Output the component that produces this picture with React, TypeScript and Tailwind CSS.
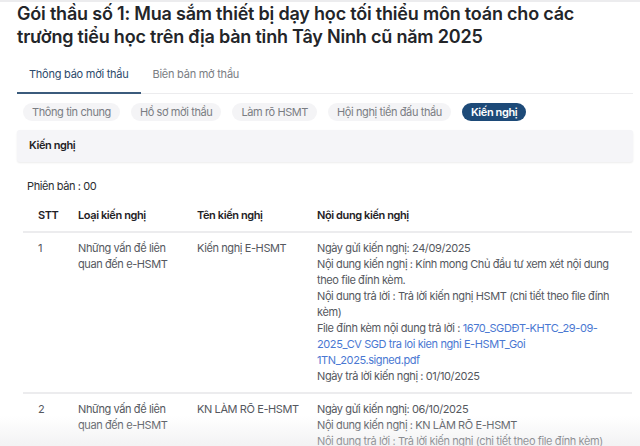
import React from "react";

const PILLS = ["Thông tin chung", "Hồ sơ mời thầu", "Làm rõ HSMT", "Hội nghị tiền đấu thầu", "Kiến nghị"];

type Row = {
  stt: string;
  loai: string;
  ten: string;
  lines: React.ReactNode[];
};

const ROWS: Row[] = [
  {
    stt: "1",
    loai: "Những vấn đề liên quan đến e-HSMT",
    ten: "Kiến nghị E-HSMT",
    lines: [
      "Ngày gửi kiến nghị: 24/09/2025",
      "Nội dung kiến nghị : Kính mong Chủ đầu tư xem xét nội dung theo file đính kèm.",
      "Nội dung trả lời : Trả lời kiến nghị HSMT (chi tiết theo file đính kèm)",
      <>
        File đính kèm nội dung trả lời :{" "}
        <span className="text-[#4a78d2]">1670_SGDĐT-KHTC_29-09-2025_CV SGD tra loi kien nghi E-HSMT_Goi 1TN_2025.signed.pdf</span>
      </>,
      "Ngày trả lời kiến nghị : 01/10/2025",
    ],
  },
  {
    stt: "2",
    loai: "Những vấn đề liên quan đến e-HSMT",
    ten: "KN LÀM RÕ E-HSMT",
    lines: [
      "Ngày gửi kiến nghị: 06/10/2025",
      "Nội dung kiến nghị : KN LÀM RÕ E-HSMT",
      "Nội dung trả lời : Trả lời kiến nghị (chi tiết theo file đính kèm)",
    ],
  },
];

const COLS = "grid grid-cols-[40px_119px_120px_1fr]";

export default function App() {
  return (
    <div className="relative w-[640px] h-[446px] overflow-hidden bg-white font-['Inter',sans-serif] tracking-[-0.4px]">
      <div className="h-[2px] bg-[#ececee]" />

      <h1 className="px-[17px] text-[18px] leading-[23px] font-semibold tracking-[-0.2px] text-[#232529]">
        Gói thầu số 1: Mua sắm thiết bị dạy học tối thiểu môn toán cho các trường tiểu học trên địa bàn tỉnh Tây Ninh cũ năm 2025
      </h1>

      <div className="ml-[17px] mr-[7px] mt-[12px] flex border-b border-[#ececee] text-[11px] tracking-[-0.25px]">
        <div className="-mb-px border-b-2 border-[#3b5b7c] px-[12px] pt-[6px] pb-[9px] text-[#2c4a6b]">Thông báo mời thầu</div>
        <div className="px-[12px] pt-[6px] pb-[9px] text-[#7a7d83]">Biên bản mở thầu</div>
      </div>

      <div className="mt-[9px] flex gap-[11px] pl-[23px] text-[11px]">
        {PILLS.map((p, i) => (
          <span
            key={p}
            className={
              i === PILLS.length - 1
                ? "h-[18px] rounded-full bg-[#1d4a78] px-[9px] leading-[18px] font-semibold text-white"
                : "h-[18px] rounded-full bg-[#f4f4f6] px-[9px] leading-[18px] text-[#7a7d83]"
            }
          >
            {p}
          </span>
        ))}
      </div>

      <div className="ml-[17px] mr-[7px] mt-[9px] flex h-[32px] items-center rounded-[3px] bg-[#f5f5f8] pl-[12px] text-[11px] font-semibold text-[#1f2226] shadow-[0_1px_2px_rgba(0,0,0,0.08)]">
        Kiến nghị
      </div>

      <div className="mt-[16px] pl-[27px] text-[11px] leading-[16px] text-[#2a2d31]">Phiên bản : 00</div>

      <div className="ml-[23px] mr-[8px] mt-[6px] text-[11px] leading-[16px]">
        <div className={`${COLS} border-b-2 border-[#ececee] pt-[7px] pb-[8px] font-semibold text-[#1f2226]`}>
          <div className="pl-[15px]">STT</div>
          <div className="pl-[15px]">Loại kiến nghị</div>
          <div className="pl-[15px]">Tên kiến nghị</div>
          <div className="pl-[15px]">Nội dung kiến nghị</div>
        </div>
        {ROWS.map((r) => (
          <div key={r.stt} className={`${COLS} border-b-2 border-[#ececee] pt-[7px] pb-[8px] text-[#55585e]`}>
            <div className="pl-[15px]">{r.stt}</div>
            <div className="pl-[15px] pr-[4px]">{r.loai}</div>
            <div className="pl-[15px]">{r.ten}</div>
            <div className="pl-[15px] pr-[20px]">
              {r.lines.map((l, i) => (
                <div key={i}>{l}</div>
              ))}
            </div>
          </div>
        ))}
      </div>

      <div className="pointer-events-none absolute inset-x-0 bottom-0 h-[30px] bg-gradient-to-b from-transparent to-[#e6e6e8]/50" />
    </div>
  );
}
